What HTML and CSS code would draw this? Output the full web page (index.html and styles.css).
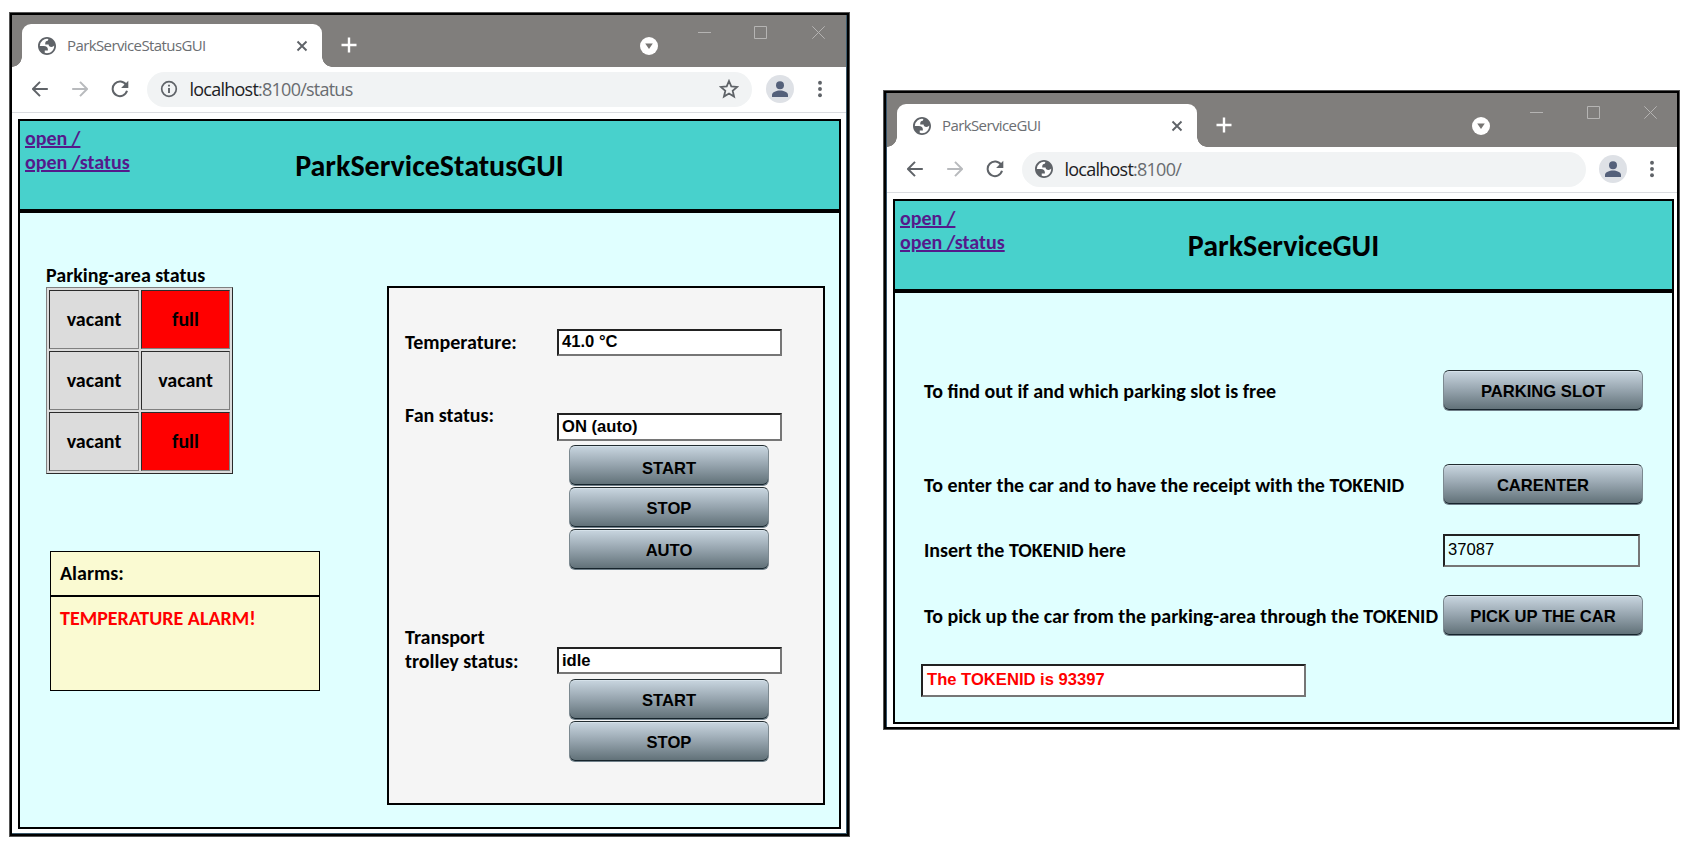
FILE: index.html
```
<!DOCTYPE html>
<html lang="en">
<head>
<meta charset="utf-8">
<title>Park Service</title>
<link rel="stylesheet" href="styles.css">
</head>
<body>
<svg class="defs" width="0" height="0">
  <symbol id="globe" viewBox="2 2 20 20">
    <circle cx="12" cy="12" r="9" fill="#fff"/>
    <path d="M12 2C6.480 2 2 6.480 2 12s4.480 10 10 10 10-4.480 10-10S17.520 2 12 2zM4 12h4.400c3.407.022 4.922 1.730 4.543 5.127H9.488v2.470a8.004 8.004 0 0 0 10.498-8.083C19.327 12.504 18.332 13 17 13c-2.137 0-3.206-.916-3.206-2.750h-3.748c-.274-2.728.683-4.092 2.870-4.092 0-.975.327-1.597.811-1.970A8.004 8.004 0 0 0 4 12z" fill="#5f6368" fill-rule="evenodd"/>
  </symbol>
  <symbol id="cross" viewBox="0 0 12 12"><path d="M1.500 1.500l9 9M10.500 1.500l-9 9" stroke="#5f6368" stroke-width="1.900"/></symbol>
  <symbol id="plus" viewBox="0 0 16 16"><path d="M8 .5v15M.5 8h15" stroke="#fff" stroke-width="2.400"/></symbol>
  <symbol id="drop" viewBox="0 0 18 18"><circle cx="9" cy="9" r="9" fill="#fff"/><path d="M5.200 6.500h7.600L9 12z" fill="#777573"/></symbol>
  <symbol id="min" viewBox="0 0 13 13"><path d="M0 6.500h13" stroke="#b5b4b3"/></symbol>
  <symbol id="max" viewBox="0 0 13 13"><path d="M.5.500h12v12H.5z" fill="none" stroke="#b5b4b3"/></symbol>
  <symbol id="shut" viewBox="0 0 13 13"><path d="M.3.300l12.400 12.400M12.700.300L.3 12.700" stroke="#b5b4b3"/></symbol>
  <symbol id="arrow" viewBox="0 0 16 16"><path d="M15.800 8H1.200M8 .900L.9 8 8 15.100" fill="none" stroke="currentColor" stroke-width="2"/></symbol>
  <symbol id="reload" viewBox="0 0 18 18"><path d="M15.200 5A7.300 7.300 0 1 0 16 10.800" fill="none" stroke="#5f6368" stroke-width="2"/><path d="M17.300.800v7.200h-7.200z" fill="#5f6368"/></symbol>
  <symbol id="info" viewBox="0 0 18 18"><circle cx="9" cy="9" r="7.300" fill="none" stroke="#5f6368" stroke-width="1.700"/><path d="M9 7.900v5M9 4.800v1.800" stroke="#5f6368" stroke-width="1.900"/></symbol>
  <symbol id="star" viewBox="0 0 18 18"><path d="M9 1.800l2.050 4.900 5.300.45-4.050 3.450 1.250 5.200L9 13l-4.550 2.800 1.250-5.200L1.650 7.150l5.300-.45z" fill="none" stroke="#5f6368" stroke-width="1.600"/></symbol>
  <symbol id="person" viewBox="0 0 28 28"><circle cx="14" cy="14" r="14" fill="#dee1e6"/><circle cx="14" cy="10.200" r="4" fill="#54607a"/><path d="M6 22v-2c0-3 4.500-4.600 8-4.600s8 1.600 8 4.600v2z" fill="#54607a"/></symbol>
  <symbol id="dots" viewBox="0 0 4 18"><circle cx="2" cy="2.700" r="1.950" fill="#5f6368"/><circle cx="2" cy="9" r="1.950" fill="#5f6368"/><circle cx="2" cy="15.300" r="1.950" fill="#5f6368"/></symbol>
</svg>

<main class="desk">
  <section class="window window-status">
    <header class="titlebar">
      <div class="tab">
        <svg class="i18"><use href="#globe"/></svg>
        <span class="tab-title">ParkServiceStatusGUI</span>
        <svg class="i12"><use href="#cross"/></svg>
      </div>
      <svg class="new-tab"><use href="#plus"/></svg>
      <svg class="i18 drop"><use href="#drop"/></svg>
      <div class="controls"><svg><use href="#min"/></svg><svg><use href="#max"/></svg><svg><use href="#shut"/></svg></div>
    </header>
    <nav class="toolbar">
      <svg class="i16 back"><use href="#arrow"/></svg>
      <svg class="i16 forward"><use href="#arrow"/></svg>
      <svg class="i18"><use href="#reload"/></svg>
      <div class="address"><svg class="i18"><use href="#info"/></svg><span class="url"><b>localhost</b>:8100/status</span><svg class="i20 star"><use href="#star"/></svg></div>
      <svg class="i28"><use href="#person"/></svg>
      <svg class="menu"><use href="#dots"/></svg>
    </nav>
    <div class="page">
      <div class="banner">
        <div class="links"><a href="#">open /</a><a href="#">open /status</a></div>
        <h1>ParkServiceStatusGUI</h1>
      </div>
      <div class="status-body">
        <div class="left">
          <div class="caption">Parking-area status</div>
          <table class="slots">
            <tr><td>vacant</td><td class="full">full</td></tr>
            <tr><td>vacant</td><td>vacant</td></tr>
            <tr><td>vacant</td><td class="full">full</td></tr>
          </table>
          <div class="alarms">
            <div class="alarm-head">Alarms:</div>
            <div class="alarm-text">TEMPERATURE ALARM!</div>
          </div>
        </div>
        <div class="panel">
          <div class="label temp">Temperature:</div>
          <div class="field temp-field">41.0 °C</div>
          <div class="label fan">Fan status:</div>
          <div class="group fan-group">
            <div class="field fan-field">ON (auto)</div>
            <button class="fan-start">START</button><button>STOP</button><button>AUTO</button>
          </div>
          <div class="label trolley">Transport<br>trolley status:</div>
          <div class="group trolley-group">
            <div class="field trolley-field">idle</div>
            <button>START</button><button>STOP</button>
          </div>
        </div>
      </div>
    </div>
  </section>

  <section class="window window-service">
    <header class="titlebar">
      <div class="tab">
        <svg class="i18"><use href="#globe"/></svg>
        <span class="tab-title">ParkServiceGUI</span>
        <svg class="i12"><use href="#cross"/></svg>
      </div>
      <svg class="new-tab"><use href="#plus"/></svg>
      <svg class="i18 drop"><use href="#drop"/></svg>
      <div class="controls"><svg><use href="#min"/></svg><svg><use href="#max"/></svg><svg><use href="#shut"/></svg></div>
    </header>
    <nav class="toolbar">
      <svg class="i16 back"><use href="#arrow"/></svg>
      <svg class="i16 forward"><use href="#arrow"/></svg>
      <svg class="i18"><use href="#reload"/></svg>
      <div class="address"><svg class="i18"><use href="#globe"/></svg><span class="url"><b>localhost</b>:8100/</span></div>
      <svg class="i28"><use href="#person"/></svg>
      <svg class="menu"><use href="#dots"/></svg>
    </nav>
    <div class="page">
      <div class="banner">
        <div class="links"><a href="#">open /</a><a href="#">open /status</a></div>
        <h1>ParkServiceGUI</h1>
      </div>
      <div class="service-body">
        <div class="row row-slot"><span>To find out if and which parking slot is free</span><button>PARKING SLOT</button></div>
        <div class="row row-enter"><span>To enter the car and to have the receipt with the TOKENID</span><button>CARENTER</button></div>
        <div class="row row-token"><span>Insert the TOKENID here</span><div class="field token">37087</div></div>
        <div class="row row-pick"><span>To pick up the car from the parking-area through the TOKENID</span><button>PICK UP THE CAR</button></div>
        <div class="field result">The TOKENID is 93397</div>
      </div>
    </div>
  </section>
</main>
</body>
</html>
```
FILE: styles.css
```
* { box-sizing: border-box; }
body { margin: 0; background: #fff; font: bold 20px/24px Carlito, Lato, sans-serif; color: #000; overflow: hidden; }
.defs { position: absolute; }
svg { flex: none; display: block; }
.desk { display: flex; align-items: flex-start; width: 1690px; height: 845px; padding: 12px 0 0 9px; }

/* browser windows */
.window { flex: none; display: flex; flex-direction: column; border: 1px solid #555; background: #fff; }
.window-status { width: 841px; height: 825px; box-shadow: inset 0 0 0 2px #000, inset -3px -3px 0 0 #3c5a6c; padding: 2px 3px 3px 2px; }
.window-service { width: 797px; height: 640px; margin: 78px 0 0 33px; box-shadow: inset 0 0 0 2px #000, inset 3px 0 0 0 #35536b; padding: 2px 2px 2px 3px; }

.titlebar { flex: none; display: flex; height: 52px; padding: 9px 0 0 10px; background: #807e7c; }
.window-service .titlebar { height: 54px; padding-top: 11px; }
.tab { position: relative; flex: none; display: flex; align-items: center; width: 300px; height: 43px; padding: 0 14px 0 16px; background: #fff; border-radius: 9px 9px 0 0; }
.tab::before, .tab::after { content: ""; position: absolute; bottom: 0; width: 10px; height: 10px; }
.tab::before { left: -10px; background: radial-gradient(circle at 0 0, transparent 9.500px, #fff 10px); }
.tab::after { right: -10px; background: radial-gradient(circle at 100% 0, transparent 9.500px, #fff 10px); }
.tab-title { flex: 1; margin: -2px 0 0 11px; font: 15px/20px "Open Sans", sans-serif; letter-spacing: -0.6px; color: #6b6e72; }
.i12 { width: 12px; height: 12px; }
.i16 { width: 16px; height: 16px; }
.i18 { width: 18px; height: 18px; }
.i20 { width: 20px; height: 20px; }
.i28 { width: 28px; height: 28px; }
.new-tab { width: 16px; height: 16px; margin: 13px 0 0 19px; }
.drop { margin: 13px 0 0 auto; }
.controls { display: flex; gap: 44px; margin: 2px 21px 0 40px; }
.controls svg { width: 13px; height: 13px; }
.window-status .controls { gap: 43px; }
.window-status .controls svg:last-child { margin-left: 2px; }
.window-service .controls { margin: 2px 20px 0 40px; }

.toolbar { flex: none; display: flex; align-items: center; height: 46px; padding: 0 24.500px 1px 19.500px; border-bottom: 1px solid #dadce0; }
.back { color: #5f6368; margin-right: 24px; }
.forward { color: #b8babd; transform: scaleX(-1); margin-right: 23.500px; }
.address { flex: 1; display: flex; align-items: center; height: 35px; margin: 0 14px 0 18px; padding: 0 13px 0 13px; border-radius: 18px; background: #f1f3f4; }
.window-service .address { margin-right: 13px; }
.window-service .toolbar { padding-right: 23px; }
.url { margin-left: 11.500px; font: 18px/24px "Open Sans", sans-serif; letter-spacing: -0.76px; color: #696c70; }
.url b { font-weight: 400; color: #202124; }
.star { margin-left: auto; }
.menu { width: 4px; height: 18px; margin-left: 23.500px; }

/* page */
.page { flex: 1; margin: 6px 5px 4px 6px; border: 2px solid #000; background: #e0ffff; display: flex; flex-direction: column; }
.window-service .page { margin: 6px 3px 3px 6px; }
.banner { position: relative; flex: none; height: 92px; border-bottom: 4px solid #000; background: #48d1cc; }
.links { position: absolute; left: 5px; top: 5px; display: flex; flex-direction: column; align-items: flex-start; }
.links a { color: #551a8b; text-decoration: underline 2px; text-underline-offset: 1px; text-decoration-skip-ink: auto; }
h1 { margin: 0; padding-top: 29px; text-align: center; font-size: 30px; line-height: 32px; }

.field { border: 2px solid; border-color: #222 #767676 #767676 #222; background: #fff; padding-left: 3px; font: bold 16.600px/21px "Liberation Sans", Arial, sans-serif; }
button { display: block; width: 200px; height: 41px; padding: 2px 0 0; border: 1px solid #7c8990; border-top-color: #222c30; border-bottom-color: #70808a; border-radius: 6px; background: linear-gradient(#c9d6e0, #9aa8b2 45%, #5f6f76); box-shadow: inset 0 -1px 0 #16242c, inset 0 1px 0 #d5e1e9; font: bold 16.600px/37px "Liberation Sans", Arial, sans-serif; color: #000; }

.status-body { flex: 1; display: flex; align-items: flex-start; }
.left { width: 367px; padding: 50px 0 0 26px; }
.caption { height: 24px; }
.slots { width: 187px; border: 1px solid; border-color: #808080 #2b2b2b #2b2b2b #808080; border-spacing: 2px; border-collapse: separate; background: #dcdcdc; }
.slots td { width: 90px; height: 59px; padding: 0 0 2px; border: 1px solid; border-color: #2b2b2b #808080 #808080 #2b2b2b; text-align: center; }
.slots td + td { width: 89px; }
.slots .full { background: #f00; }
.alarms { width: 270px; height: 140px; margin: 77px 0 0 4px; border: 1px solid #000; background: #fafad2; }
.alarm-head { height: 45px; padding: 9px 9px 0; border-bottom: 2px solid #000; }
.alarm-text { padding: 9px 9px 0; color: #f00; }

.panel { display: grid; grid-template-columns: 152px 225px; grid-template-rows: 84px 214px 1fr; width: 438px; height: 519px; margin-top: 73px; padding: 41px 0 0 16px; border: 2px solid #000; background: #f5f5f5; align-items: start; }
.temp { margin-top: 1px; }
.temp-field { height: 27px; }
.fan { margin-top: -10px; }
.fan-field { height: 28px; line-height: 24px; margin-bottom: 4px; }
.group { display: flex; flex-direction: column; }
.group button { margin: 0 0 1px 12px; }
.group .fan-start { padding-top: 4px; }
.trolley { margin-top: -2px; }
.trolley-group { margin-top: 20px; }
.trolley-field { height: 27px; line-height: 23px; margin-bottom: 5px; }

.service-body { padding: 77px 29px 0 26px; }
.row { display: flex; justify-content: space-between; height: 41px; padding-left: 3px; }
.row span { padding-top: 9px; white-space: nowrap; }
.row-enter { margin-top: 53px; }
.row-token { height: 33px; margin-top: 29px; }
.row-token span { padding-top: 4px; }
.token { width: 197px; margin-right: 3px; background: transparent; font-weight: 400; line-height: 27px; }
.row-pick { margin-top: 28px; }
.result { width: 385px; height: 33px; margin-top: 28px; padding-left: 4px; line-height: 28px; color: #f00; }
```
